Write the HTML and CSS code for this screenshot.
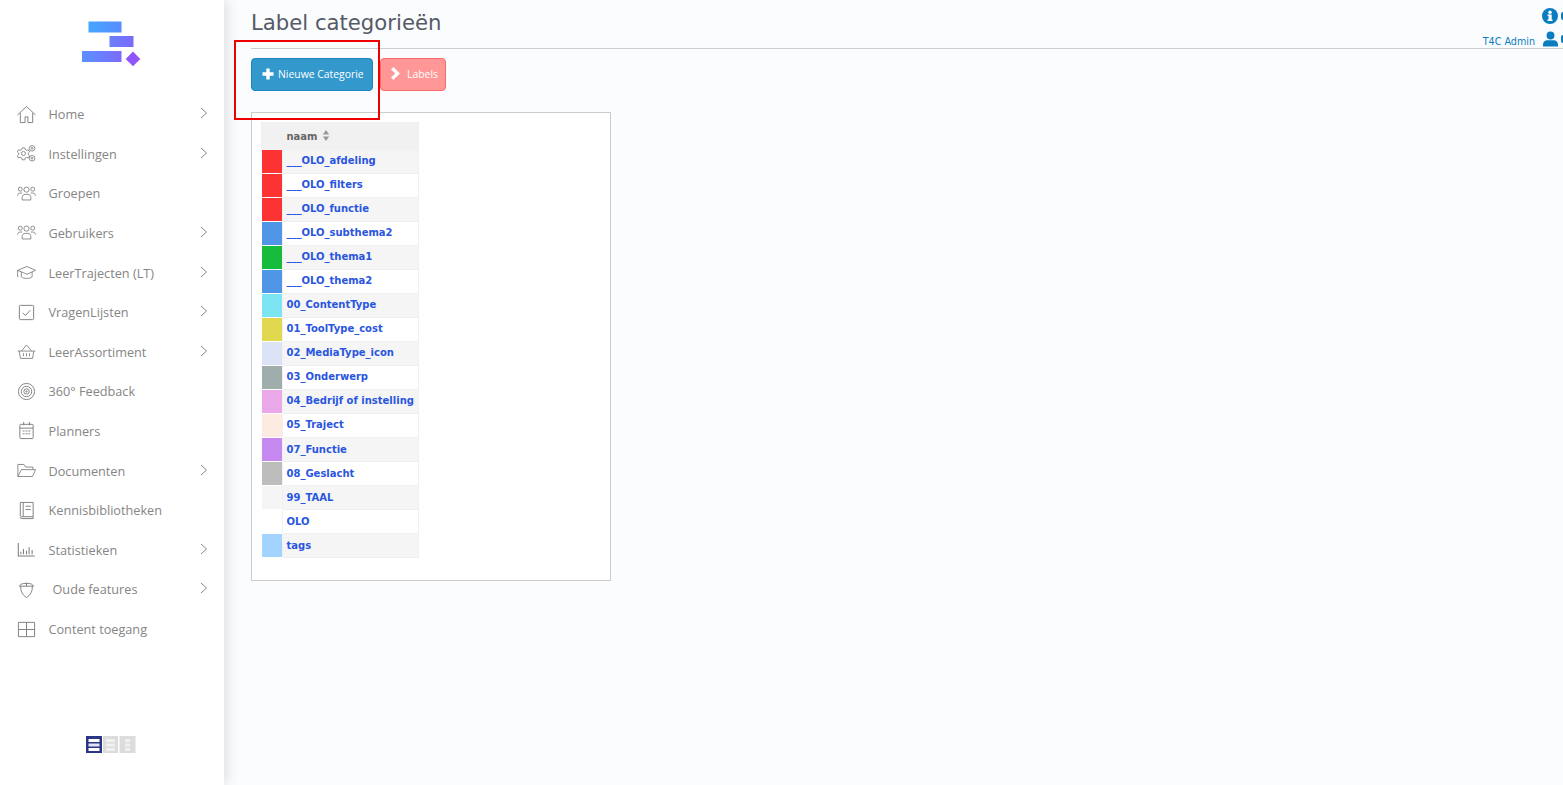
FILE: index.html
```html
<!DOCTYPE html>
<html lang="nl">
<head>
<meta charset="utf-8">
<title>Label categorieën</title>
<link rel="stylesheet" href="styles.css">
</head>
<body>
<div class="app">
  <aside class="sidebar">
    <div class="logo">
      <svg width="60" height="48" viewBox="0 0 60 48">
        <defs>
          <linearGradient id="g1" x1="0" y1="0" x2="1" y2="0"><stop offset="0" stop-color="#45a6ff"/><stop offset="1" stop-color="#5a8cff"/></linearGradient>
          <linearGradient id="g2" x1="0" y1="0" x2="1" y2="0"><stop offset="0" stop-color="#6a80fa"/><stop offset="1" stop-color="#7a6afa"/></linearGradient>
          <linearGradient id="g3" x1="0" y1="0" x2="1" y2="0"><stop offset="0" stop-color="#5a90ff"/><stop offset="1" stop-color="#7b6cfb"/></linearGradient>
        </defs>
        <rect x="6.500" y="0.500" width="33" height="11" fill="url(#g1)"/>
        <rect x="27.500" y="15" width="24" height="11" fill="url(#g2)"/>
        <rect x="0" y="30" width="39.500" height="11" fill="url(#g3)"/>
        <path d="M51 30.500 58.300 38 51 45.300 43.700 38Z" fill="#8f55fb"/>
      </svg>
    </div>
    <nav class="menu">
      <a class="item">
        <svg class="ico" viewBox="0 0 20 20"><path d="M.5 10.500 10 1.500l9.500 9M3.500 8.500v10h5v-6h3v6h5v-10"/></svg>
        <span class="lbl">Home</span><svg class="chev" viewBox="0 0 8 12"><path d="M1 1l5.500 5L1 11"/></svg>
      </a>
      <a class="item">
        <svg class="ico" viewBox="0 0 22 20"><circle cx="7.500" cy="10" r="2.300"/><path d="M6 3.500h3l.5 2 1.800.9 1.900-.7 1.400 2.400-1.500 1.400v1.800l1.500 1.300-1.400 2.500-1.900-.7-1.800.9-.5 2H6l-.5-2-1.800-.9-1.900.7L.4 12.600l1.500-1.300V9.500L.4 8.100l1.400-2.400 1.900.7 1.800-.9z"/><circle cx="17.500" cy="4" r="3.200"/><circle cx="17.500" cy="4" r="1"/><circle cx="17.500" cy="15.500" r="3.200"/><circle cx="17.500" cy="15.500" r="1"/></svg>
        <span class="lbl">Instellingen</span><svg class="chev" viewBox="0 0 8 12"><path d="M1 1l5.500 5L1 11"/></svg>
      </a>
      <a class="item">
        <svg class="ico" viewBox="0 0 22 20"><circle cx="11" cy="5.500" r="3"/><circle cx="3.800" cy="5" r="2.300"/><circle cx="18.200" cy="5" r="2.300"/><path d="M6 17.500v-3c0-2 1.500-3.500 3.500-3.500h3c2 0 3.500 1.500 3.500 3.500v3zM.8 12.500c0-2 1-3 3-3H6M21.200 12.500c0-2-1-3-3-3H16"/></svg>
        <span class="lbl">Groepen</span>
      </a>
      <a class="item">
        <svg class="ico" viewBox="0 0 22 20"><circle cx="11" cy="5.500" r="3"/><circle cx="3.800" cy="5" r="2.300"/><circle cx="18.200" cy="5" r="2.300"/><path d="M6 17.500v-3c0-2 1.500-3.500 3.500-3.500h3c2 0 3.500 1.500 3.500 3.500v3zM.8 12.500c0-2 1-3 3-3H6M21.200 12.500c0-2-1-3-3-3H16"/></svg>
        <span class="lbl">Gebruikers</span><svg class="chev" viewBox="0 0 8 12"><path d="M1 1l5.500 5L1 11"/></svg>
      </a>
      <a class="item">
        <svg class="ico" viewBox="0 0 22 20"><path d="M.8 7.500 11.500 3 21.500 7.500 11.500 12zM5 9.500V15c2.500 2.500 10 2.500 12.500 0V9.500M.8 7.500c-.5 2.500-.3 5 .2 8"/></svg>
        <span class="lbl">LeerTrajecten (LT)</span><svg class="chev" viewBox="0 0 8 12"><path d="M1 1l5.500 5L1 11"/></svg>
      </a>
      <a class="item">
        <svg class="ico" viewBox="0 0 20 20"><rect x="2.500" y="2.500" width="15" height="15" rx="1"/><path d="M6 10.500 9 13l5-5.500"/></svg>
        <span class="lbl">VragenLijsten</span><svg class="chev" viewBox="0 0 8 12"><path d="M1 1l5.500 5L1 11"/></svg>
      </a>
      <a class="item">
        <svg class="ico" viewBox="0 0 22 20"><path d="M.8 9.500h20.400M2.500 9.500l1.500 8.500h14l1.500-8.500M5 9.500 11 2.500l6 7M7.500 12v3.500M11 12v3.500M14.500 12v3.500"/></svg>
        <span class="lbl">LeerAssortiment</span><svg class="chev" viewBox="0 0 8 12"><path d="M1 1l5.500 5L1 11"/></svg>
      </a>
      <a class="item">
        <svg class="ico" viewBox="0 0 20 20"><circle cx="10" cy="10" r="8.500"/><circle cx="10" cy="10" r="5.500"/><circle cx="10" cy="10" r="2.800"/><circle cx="10" cy="10" r=".7"/></svg>
        <span class="lbl">360° Feedback</span>
      </a>
      <a class="item">
        <svg class="ico" viewBox="0 0 20 20"><rect x="3" y="3.500" width="14" height="15" rx="1"/><path d="M3 7.500h14M7 1v3.500M13 1v3.500M6 10.500h2M9 10.500h2M12 10.500h2M6 13.500h2M9 13.500h2M12 13.500h2"/></svg>
        <span class="lbl">Planners</span>
      </a>
      <a class="item">
        <svg class="ico" viewBox="0 0 22 20"><path d="M1 17V3h7l2 3h8.500v3M1 17 5 9h16.500L18 17z"/></svg>
        <span class="lbl">Documenten</span><svg class="chev" viewBox="0 0 8 12"><path d="M1 1l5.500 5L1 11"/></svg>
      </a>
      <a class="item">
        <svg class="ico" viewBox="0 0 20 20"><path d="M3.500 16V1.500h13.500v15H5C4 16.500 3.500 17 3.500 17.500s.5 1 1.500 1h12v-2M6.500 1.500v15M9 5.500h5.500M9 9h5.500"/></svg>
        <span class="lbl">Kennisbibliotheken</span>
      </a>
      <a class="item">
        <svg class="ico ico-bold" viewBox="0 0 22 20"><path d="M1.500 2.500v15h19M4.500 15.500v-3M7.500 15.500v-6M11 15.500v-4M14 15.500v-8M17.500 15.500v-5"/></svg>
        <span class="lbl">Statistieken</span><svg class="chev" viewBox="0 0 8 12"><path d="M1 1l5.500 5L1 11"/></svg>
      </a>
      <a class="item">
        <svg class="ico" viewBox="0 0 20 20"><path d="M2.500 6.500h15M4 6.500c-.5 5 1.500 9 6 12 4.500-3 6.500-7 6-12M10 3v3.500M2.500 6.500c1-2 3-3 7.500-3s6.500 1 7.500 3"/></svg>
        <span class="lbl lbl-wide">Oude features</span><svg class="chev" viewBox="0 0 8 12"><path d="M1 1l5.500 5L1 11"/></svg>
      </a>
      <a class="item">
        <svg class="ico" viewBox="0 0 20 20"><path d="M1.500 2.500h17v15h-17zM1.500 10h17M10 2.500v15"/></svg>
        <span class="lbl">Content toegang</span>
      </a>
    </nav>
    <div class="switcher">
      <svg width="50" height="17" viewBox="0 0 50 17">
        <rect width="16" height="17" fill="#2b3585"/><rect x="2.500" y="3" width="11" height="3" fill="#fff"/><rect x="2.500" y="7.500" width="11" height="3" fill="#e3e4f2"/><rect x="2.500" y="12" width="11" height="3" fill="#fff"/>
        <rect x="17" width="15" height="17" fill="#dcdcdc"/><rect x="20" y="3" width="9" height="3" fill="#f0f0f0"/><rect x="20" y="7.500" width="9" height="3" fill="#f0f0f0"/><rect x="20" y="12" width="9" height="3" fill="#f0f0f0"/>
        <rect x="33.500" width="16" height="17" fill="#dcdcdc"/><rect x="39" y="3" width="5" height="3" fill="#f0f0f0"/><rect x="39" y="7.500" width="5" height="3" fill="#f0f0f0"/><rect x="39" y="12" width="5" height="3" fill="#f0f0f0"/>
      </svg>
    </div>
  </aside>

  <main class="main">
    <header class="head">
      <h1 class="title">Label categorieën</h1>
    </header>
    <div class="user">
      <div class="user-row">
        <svg class="info" viewBox="0 0 16 16"><circle cx="8" cy="8" r="8" fill="#0a7cc0"/><rect x="6.500" y="6.500" width="3.200" height="6" fill="#fff"/><rect x="5.500" y="11.500" width="5" height="1.500" fill="#fff"/><rect x="5.500" y="6.500" width="2" height="1.300" fill="#fff"/><circle cx="8" cy="4.200" r="1.700" fill="#fff"/></svg>
        <span class="stub"></span>
      </div>
      <div class="user-row user-row-2">
        <span class="uname">T4C Admin</span>
        <svg class="person" viewBox="0 0 16 16"><circle cx="8" cy="4.200" r="4.200" fill="#0a7cc0"/><path d="M0 16v-2c0-3 2-4.800 4.500-4.800h7c2.500 0 4.500 1.800 4.500 4.800v2z" fill="#0a7cc0"/></svg>
        <span class="stub"></span>
      </div>
    </div>
    <div class="actions">
      <button class="btn btn-blue"><svg class="bi" viewBox="0 0 12 12"><path d="M4.300 .5h3.400v3.800h3.800v3.400H7.700v3.800H4.300V7.700H.5V4.300h3.800z"/></svg>Nieuwe Categorie</button>
      <button class="btn btn-red"><svg class="bi bi-chev" viewBox="0 0 9 13"><path d="M2.400 0 9 6.500 2.400 13 0 10.600 4.200 6.500 0 2.400z"/></svg>Labels</button>
    </div>
    <section class="panel">
      <table class="tbl">
        <thead>
          <tr><th class="sw"></th><th class="nm">naam <svg class="sort" viewBox="0 0 8 12"><path d="M4 0l3.500 4.800h-7zM4 12 .5 7.200h7z"/></svg></th></tr>
        </thead>
        <tbody>
          <tr><td class="c-red"></td><td><a>___OLO_afdeling</a></td></tr>
          <tr><td class="c-red"></td><td><a>___OLO_filters</a></td></tr>
          <tr><td class="c-red"></td><td><a>___OLO_functie</a></td></tr>
          <tr><td class="c-blue"></td><td><a>___OLO_subthema2</a></td></tr>
          <tr><td class="c-green"></td><td><a>___OLO_thema1</a></td></tr>
          <tr><td class="c-blue"></td><td><a>___OLO_thema2</a></td></tr>
          <tr><td class="c-cyan"></td><td><a>00_ContentType</a></td></tr>
          <tr><td class="c-yellow"></td><td><a>01_ToolType_cost</a></td></tr>
          <tr><td class="c-lav"></td><td><a>02_MediaType_icon</a></td></tr>
          <tr><td class="c-slate"></td><td><a>03_Onderwerp</a></td></tr>
          <tr><td class="c-pink"></td><td><a>04_Bedrijf of instelling</a></td></tr>
          <tr><td class="c-cream"></td><td><a>05_Traject</a></td></tr>
          <tr class="low"><td class="c-purple"></td><td><a>07_Functie</a></td></tr>
          <tr class="low"><td class="c-grey"></td><td><a>08_Geslacht</a></td></tr>
          <tr class="low"><td></td><td><a>99_TAAL</a></td></tr>
          <tr class="low"><td class="c-white"></td><td><a>OLO</a></td></tr>
          <tr class="low"><td class="c-sky"></td><td><a>tags</a></td></tr>
        </tbody>
      </table>
    </section>
  </main>
</div>
<div class="annot"></div>
</body>
</html>
```
FILE: styles.css
```css
* { box-sizing: border-box; }
html, body { margin: 0; height: 100%; overflow: hidden; }
body { background: #fbfcfe; font-family: "Open Sans", "Liberation Sans", sans-serif; }

.app { display: flex; height: 785px; width: 1563px; }

.sidebar {
  width: 224px;
  flex: none;
  background: #fff;
  box-shadow: 4px 0 12px rgba(0, 0, 0, .1);
  display: flex;
  flex-direction: column;
  position: relative;
  z-index: 1;
}
.logo { height: 94.300px; padding: 21px 0 0 82px; }
.logo svg { display: block; }

.menu { display: flex; flex-direction: column; }
.item {
  height: 39.62px;
  display: flex;
  align-items: center;
  padding-left: 17px;
  color: #858585;
  font-size: 12.700px;
}
.ico {
  width: 19px;
  height: 19px;
  flex: none;
  fill: none;
  stroke: #7d7d7d;
  stroke-width: 1;
  margin-right: 12.500px;
}
.ico-bold { stroke-width: 1.200; }
.lbl { flex: 1; }
.lbl-wide { padding-left: 4px; }
.chev {
  width: 8px;
  height: 12px;
  flex: none;
  fill: none;
  stroke: #858585;
  stroke-width: 1;
  margin: 0 16px 2px 0;
}
.switcher { margin-top: auto; padding: 0 0 32px 86px; }
.switcher svg { display: block; }

.main { flex: 1; min-width: 0; padding-left: 27px; position: relative; }
.head { height: 49px; border-bottom: 1px solid #ccd0d4; }
.title {
  margin: 0;
  padding-top: 10px;
  font: 400 21.200px/26px "DejaVu Sans", sans-serif;
  color: #555a66;
}
.user {
  position: absolute;
  right: 0;
  top: 8px;
  width: 90px;
  color: #0a7cc0;
}
.user-row { display: flex; justify-content: flex-end; align-items: center; height: 16px; }
.user-row-2 { margin-top: 7px; }
.info { width: 16px; height: 16px; flex: none; }
.person { width: 15px; height: 16px; flex: none; margin-left: 8px; }
.stub { width: 2px; height: 8px; margin-left: 3px; background: #0a7cc0; border-radius: 2px 0 0 2px; }
.uname { font: 400 9.600px/14px "DejaVu Sans", sans-serif; padding-top: 6px; }

.actions { display: flex; gap: 7px; margin-top: 9px; }
.btn {
  height: 33px;
  border-radius: 4px;
  color: #fff;
  font: 400 10.400px/30px "Open Sans", sans-serif;
  display: flex;
  align-items: center;
  padding: 0 0 2px;
}
.btn-blue { width: 122px; background: #3398cc; border: 1px solid #1c86bd; padding-left: 10px; }
.btn-red { width: 66px; background: #ff9797; border: 1px solid #f96a6a; padding-left: 10px; }
.bi { width: 12px; height: 12px; fill: #fff; margin-right: 4px; flex: none; }
.bi-chev { width: 9px; height: 13px; margin-right: 7px; }

.panel {
  width: 360px;
  height: 469px;
  margin-top: 21px;
  padding: 9px;
  background: #fff;
  border: 1px solid #ccc;
}
.tbl { border-collapse: collapse; width: 158px; table-layout: fixed; font: 700 10px "DejaVu Sans", sans-serif; }
.tbl th { height: 27px; background: #f1f1f1; text-align: left; color: #666; padding: 0 0 0 3.500px; font-size: 10px; border: 1px solid #f1f1f1; }
.tbl .sw { width: 21px; }
.sort { width: 8px; height: 11px; fill: #999; vertical-align: -1px; margin-left: 1px; }
.tbl td { height: 24.030px; padding: 0 0 2px 3.500px; border: 1px solid #f0f0f0; color: #2a55e0; white-space: nowrap; }
.tbl .low td { padding-bottom: 0; }
.tbl tbody tr:nth-child(odd) td { background: #f5f5f5; }
.tbl tbody tr td:first-child { border-color: #fff #f0f0f0 #fff #fff; }
.tbl tbody tr td.c-red { background: #fb3333; }
.tbl tbody tr td.c-blue { background: #5096e6; }
.tbl tbody tr td.c-green { background: #16bb3c; }
.tbl tbody tr td.c-cyan { background: #7ce4f3; }
.tbl tbody tr td.c-yellow { background: #e0d950; }
.tbl tbody tr td.c-lav { background: #dde3f7; }
.tbl tbody tr td.c-slate { background: #9fadad; }
.tbl tbody tr td.c-pink { background: #eba8e8; }
.tbl tbody tr td.c-cream { background: #fbebe0; }
.tbl tbody tr td.c-purple { background: #c589ef; }
.tbl tbody tr td.c-grey { background: #bdbdbd; }
.tbl tbody tr td.c-white { background: #fff; }
.tbl tbody tr td.c-sky { background: #a2d4ff; }

.annot {
  position: absolute;
  left: 234px;
  top: 40px;
  width: 146px;
  height: 80px;
  border: 2px solid #ee0000;
  z-index: 2;
  pointer-events: none;
}
```
